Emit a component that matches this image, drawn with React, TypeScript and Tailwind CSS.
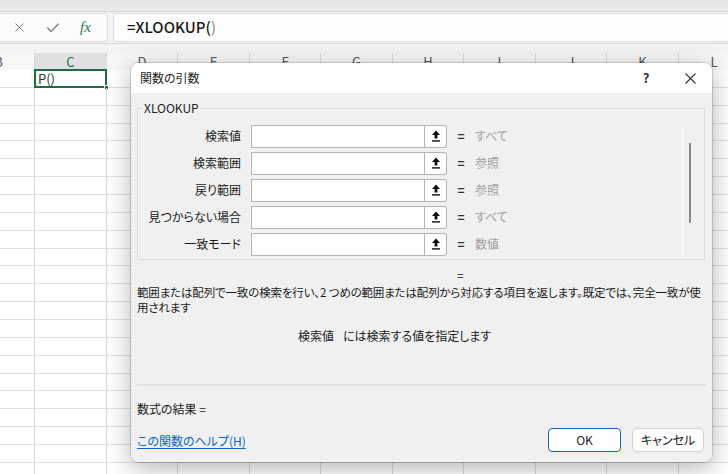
import { X, Check } from 'lucide-react';

const COLS = ['B', 'C', 'D', 'E', 'F', 'G', 'H', 'I', 'J', 'K', 'L'];
const WIDTHS = [
  'w-[35px]',
  'w-[72px]',
  'w-[71px]',
  'w-[72px]',
  'w-[71px]',
  'w-[72px]',
  'w-[71px]',
  'w-[72px]',
  'w-[71px]',
  'w-[72px]',
  'w-[71px]',
];

const ARGS = [
  { label: '検索値', value: 'すべて' },
  { label: '検索範囲', value: '参照' },
  { label: '戻り範囲', value: '参照' },
  { label: '見つからない場合', value: 'すべて' },
  { label: '一致モード', value: '数値' },
];

function CollapseIcon() {
  return (
    <svg width="10" height="12" viewBox="0 0 10 12">
      <path d="M5 0.5 L1 5 H3.6 V8.6 H6.4 V5 H9 Z" fill="#111" />
      <rect x="1" y="10.2" width="8" height="1.4" fill="#111" />
    </svg>
  );
}

function ColumnHeader() {
  return (
    <div className="flex h-[17px] bg-[#f7f7f7]">
      {COLS.map((c, i) => (
        <div
          key={c}
          className={`${WIDTHS[i]} shrink-0 overflow-hidden border-r border-[#d8d8d8] flex justify-center text-[13px] leading-[17px] ${
            c === 'C' ? 'bg-[#e0e0e0] text-[#217346]' : 'text-[#555]'
          }`}
        >
          {c === 'B' ? <div className="w-[72px] shrink-0 -ml-[37px] text-center">B</div> : c}
        </div>
      ))}
    </div>
  );
}

function GridRow({ first }: { first?: boolean }) {
  return (
    <div className="flex h-[17.86px] border-b border-[#e1e1e1]">
      {COLS.map((c, i) => (
        <div key={c} className={`${WIDTHS[i]} shrink-0 border-r border-[#d8d8d8] relative`}>
          {first && c === 'C' && (
            <>
              <div className="absolute -top-[1px] -left-[1px] -right-[1px] -bottom-[1px] border-2 border-[#1e6c41]" />
              <span className="absolute left-[3px] top-0 text-[13px] leading-[17px] text-[#333]">P()</span>
              <div className="absolute -right-[3px] -bottom-[3px] w-[5px] h-[5px] bg-[#1e6c41] border border-white" />
            </>
          )}
        </div>
      ))}
    </div>
  );
}

function FunctionArgsDialog() {
  return (
    <div className="absolute left-[131px] top-[63px] w-[581px] h-[399px] rounded-[8px] overflow-hidden flex flex-col shadow-[0_0_0_1px_rgba(0,0,0,0.14),0_6px_26px_rgba(0,0,0,0.3)]">
      {/* Title bar */}
      <div className="h-[30px] bg-white flex items-center pl-[9px] text-[12px] text-[#1a1a1a]">
        <span>関数の引数</span>
        <div className="ml-auto flex items-center">
          <span className="w-[30px] text-center text-[13px] font-semibold text-[#333]">?</span>
          <div className="w-[44px] ml-[7px] flex justify-center">
            <svg width="11" height="11" viewBox="0 0 11 11">
              <path d="M0.5 0.5 L10.5 10.5 M10.5 0.5 L0.5 10.5" stroke="#333" strokeWidth="1.1" />
            </svg>
          </div>
        </div>
      </div>

      {/* Body */}
      <div className="flex-1 bg-[#f0f0f0] px-[6px] flex flex-col text-[12px] text-[#1a1a1a]">
        <fieldset className="mt-[8px] w-[568px] border border-[#dcdcdc] pt-[9.5px] pb-[3px]">
          <legend className="ml-[5px] px-[1px] leading-[14px] text-[#222]">XLOOKUP</legend>
          <div className="flex">
            <div className="flex flex-col gap-[4px]">
              {ARGS.map((a) => (
                <div key={a.label} className="flex items-center h-[23px]">
                  <span className="w-[103px] text-right">{a.label}</span>
                  <div className="ml-[10px] w-[174px] h-[23px] border border-[#b3b3b3] bg-white" />
                  <div className="w-[22px] h-[23px] border border-l-0 border-[#b3b3b3] rounded-r-[3px] bg-white flex items-center justify-center">
                    <CollapseIcon />
                  </div>
                  <span className="ml-[10px] w-[8px] text-center font-bold text-[#333]">=</span>
                  <span className="ml-[10px] text-[#a0a0a0]">{a.value}</span>
                </div>
              ))}
            </div>
            <div className="ml-auto mr-[5px] w-[17px] h-[131px] border-l border-[#fbfbfb]">
              <div className="ml-[6px] mt-[18px] w-[2px] h-[80px] bg-[#8a8a8a]" />
            </div>
          </div>
        </fieldset>

        <div className="mt-[8px] h-[14px] leading-[14px] pl-[320px]">=</div>

        <p className="mt-[3px] leading-[15px] text-[11.5px] tracking-[-0.15px] whitespace-nowrap">
          範囲または配列で一致の検索を行い、2 つめの範囲または配列から対応する項目を返します。既定では、完全一致が使
          <br />
          用されます
        </p>

        <p className="mt-[13px] leading-[15px] pl-[161px]">
          <span className="mr-[9px]">検索値</span>
          <span>には検索する値を指定します</span>
        </p>

        <div className="mt-[41px] h-[2px] w-[569px] bg-[#e3e3e3]" />

        <p className="mt-[15px] leading-[15px]">数式の結果 =</p>

        <div className="mt-[12px] h-[24px] flex items-center">
          <a href="#" className="pt-[3px] text-[#0a66c8] underline underline-offset-2">
            この関数のヘルプ(H)
          </a>
          <button className="ml-auto w-[73px] h-[24px] rounded-[4px] border border-[#1466c4] bg-white text-[12px]">
            OK
          </button>
          <button className="ml-[11px] mr-[2px] w-[72px] h-[24px] rounded-[4px] border border-[#d2d2d2] bg-[#fdfdfd] text-[12px]">
            キャンセル
          </button>
        </div>
      </div>
    </div>
  );
}

export default function App() {
  return (
    <div className="relative w-[728px] h-[474px] overflow-hidden bg-white font-['Noto_Sans_CJK_JP','Noto_Sans',sans-serif] [font-feature-settings:'palt']">
      {/* Ribbon edge */}
      <div className="h-[12px] bg-gradient-to-b from-[#e2e2e2] to-[#ebebeb] border-b border-[#d6d6d6]" />

      {/* Formula bar */}
      <div className="h-[31px] bg-[#f3f3f3] flex gap-[5px] py-[1px]">
        <div className="w-[108px] bg-[#fbfbfb] border border-l-0 border-[#dcdcdc] rounded-r-[4px] flex items-center">
          <X size={15} strokeWidth={1.4} className="ml-[12px] text-[#6a6a6a]" />
          <Check size={16} strokeWidth={1.6} className="ml-[18px] text-[#6a6a6a]" />
          <span className="ml-[19px] font-['Liberation_Serif'] italic text-[15px] text-[#2b7a4b]">fx</span>
        </div>
        <div className="flex-1 bg-[#fdfdfd] border border-r-0 border-[#dcdcdc] rounded-l-[4px] flex items-center pl-[13px] text-[15px] font-medium text-[#1a1a1a]">
          =XLOOKUP(<span className="text-[#9a9a9a]">)</span>
        </div>
      </div>

      <div className="h-[10px] bg-[#f3f3f3] border-t border-[#dadada]" />

      <ColumnHeader />
      {Array.from({ length: 23 }).map((_, r) => (
        <GridRow key={r} first={r === 0} />
      ))}

      <FunctionArgsDialog />
    </div>
  );
}
